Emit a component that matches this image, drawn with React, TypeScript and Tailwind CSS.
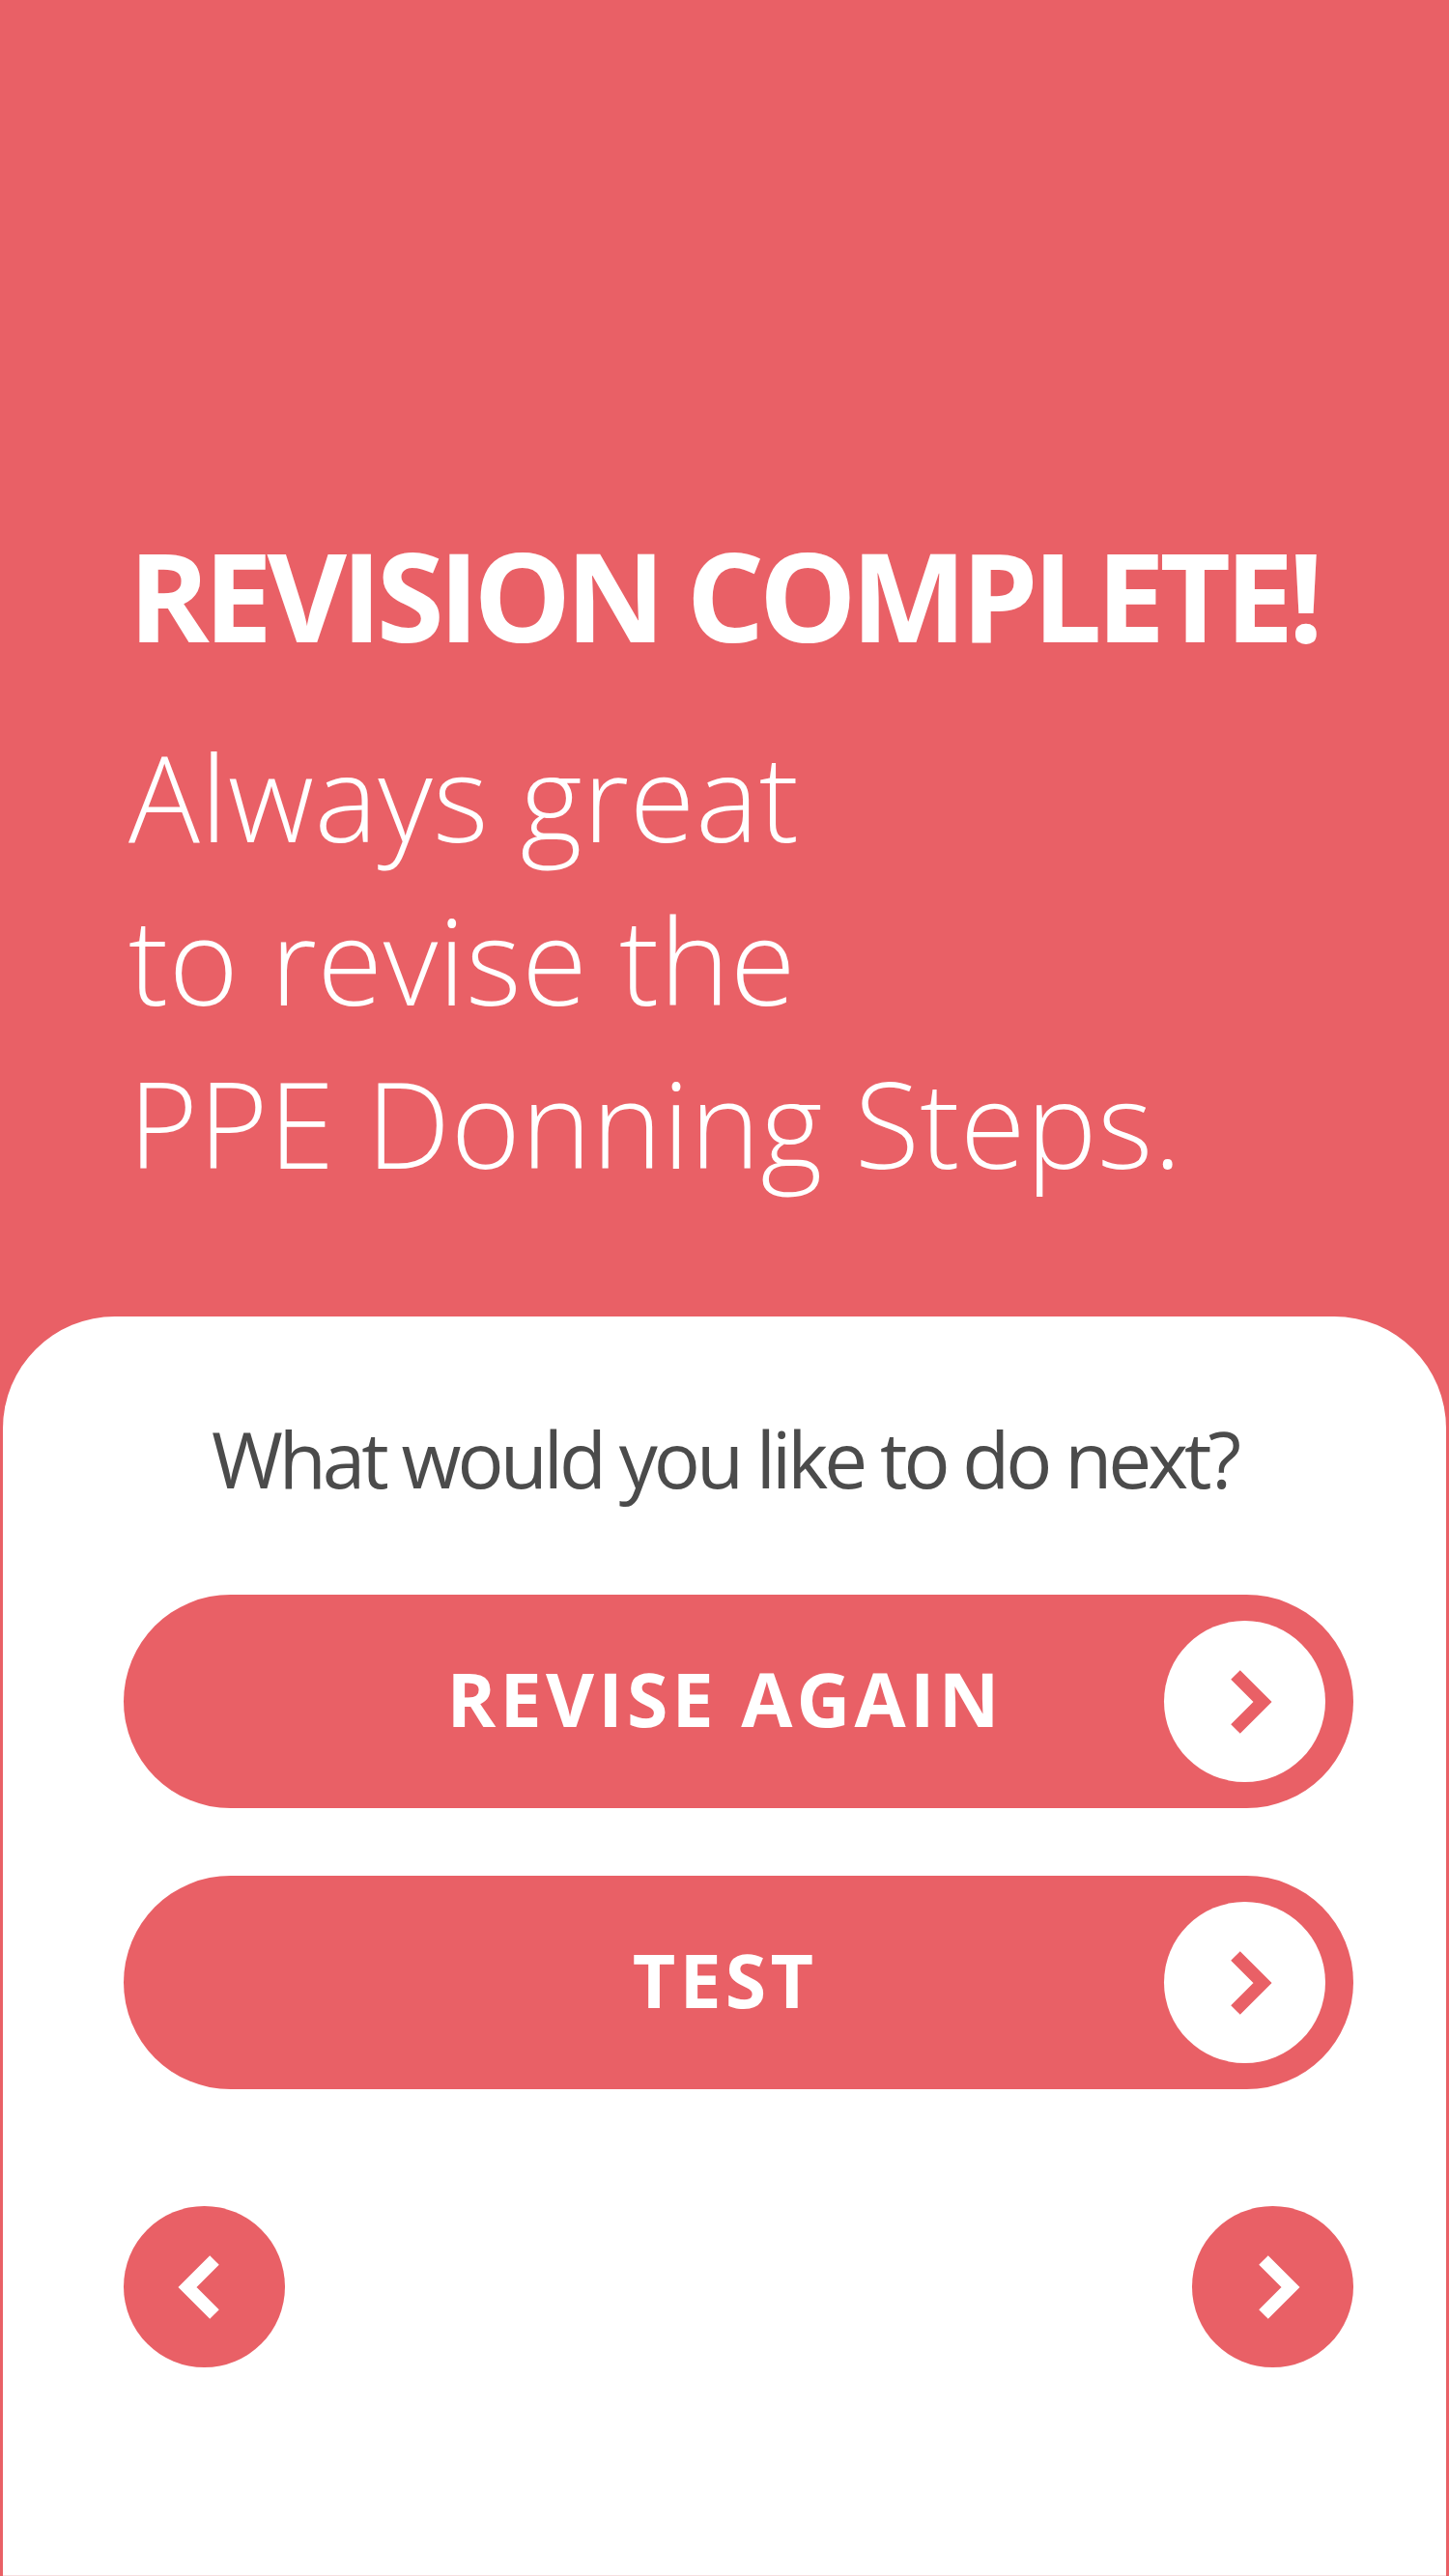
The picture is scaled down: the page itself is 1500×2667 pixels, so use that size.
const Chevron = ({ dir = "right", color }: { dir?: "left" | "right"; color: string }) => (
  <svg
    width="43"
    height="68"
    viewBox="0 0 43 68"
    className={dir === "left" ? "-scale-x-100" : ""}
  >
    <polyline
      points="5,6 33,34 5,62"
      fill="none"
      stroke={color}
      strokeWidth="13.5"
      strokeLinecap="butt"
      strokeLinejoin="miter"
    />
  </svg>
);

const ActionButton = ({ label }: { label: string }) => (
  <button className="flex h-[221px] w-full items-center rounded-full bg-[#e96066] pr-[29px]">
    <span className="mb-[6px] flex-1 pl-[168px] text-center text-[77px] font-bold leading-[77px] tracking-[0.055em] text-white">
      {label}
    </span>
    <span className="flex h-[167px] w-[167px] shrink-0 items-center justify-center rounded-full bg-white">
      <span className="ml-[14px] flex">
        <Chevron color="#e96066" />
      </span>
    </span>
  </button>
);

const NavButton = ({ dir }: { dir: "left" | "right" }) => (
  <button className="flex h-[167px] w-[167px] items-center justify-center rounded-full bg-[#e96066]">
    <span className={dir === "left" ? "mr-[12px] flex" : "ml-[14px] flex"}>
      <Chevron dir={dir} color="#ffffff" />
    </span>
  </button>
);

export default function App() {
  return (
    <div
      className="flex min-h-[2667px] flex-col bg-[#e96066]"
      style={{ fontFamily: '"Open Sans", "Noto Sans", sans-serif' }}
    >
      <header className="pb-[116px] pl-[133px] pt-[546px] text-white">
        <h1 className="text-[127px] font-bold leading-[140px] tracking-[-0.045em]">
          REVISION COMPLETE!
        </h1>
        <p className="mt-[54px] text-[123px] font-light leading-[169px] tracking-[0.005em]">
          Always great
          <br />
          to revise the
          <br />
          PPE Donning Steps.
        </p>
      </header>

      <section className="mx-[3px] flex-1 rounded-t-[116px] border-b border-[#f7dfe0] bg-white pt-[97px]">
        <p className="text-center text-[80px] leading-[100px] tracking-[-0.05em] text-[#4b4b4b]">
          What would you like to do next?
        </p>

        <div className="mt-[91px] flex flex-col gap-[70px] pl-[125px] pr-[96px]">
          <ActionButton label="REVISE AGAIN" />
          <ActionButton label="TEST" />
        </div>

        <div className="mt-[121px] flex justify-between pl-[125px] pr-[96px]">
          <NavButton dir="left" />
          <NavButton dir="right" />
        </div>
      </section>
    </div>
  );
}
